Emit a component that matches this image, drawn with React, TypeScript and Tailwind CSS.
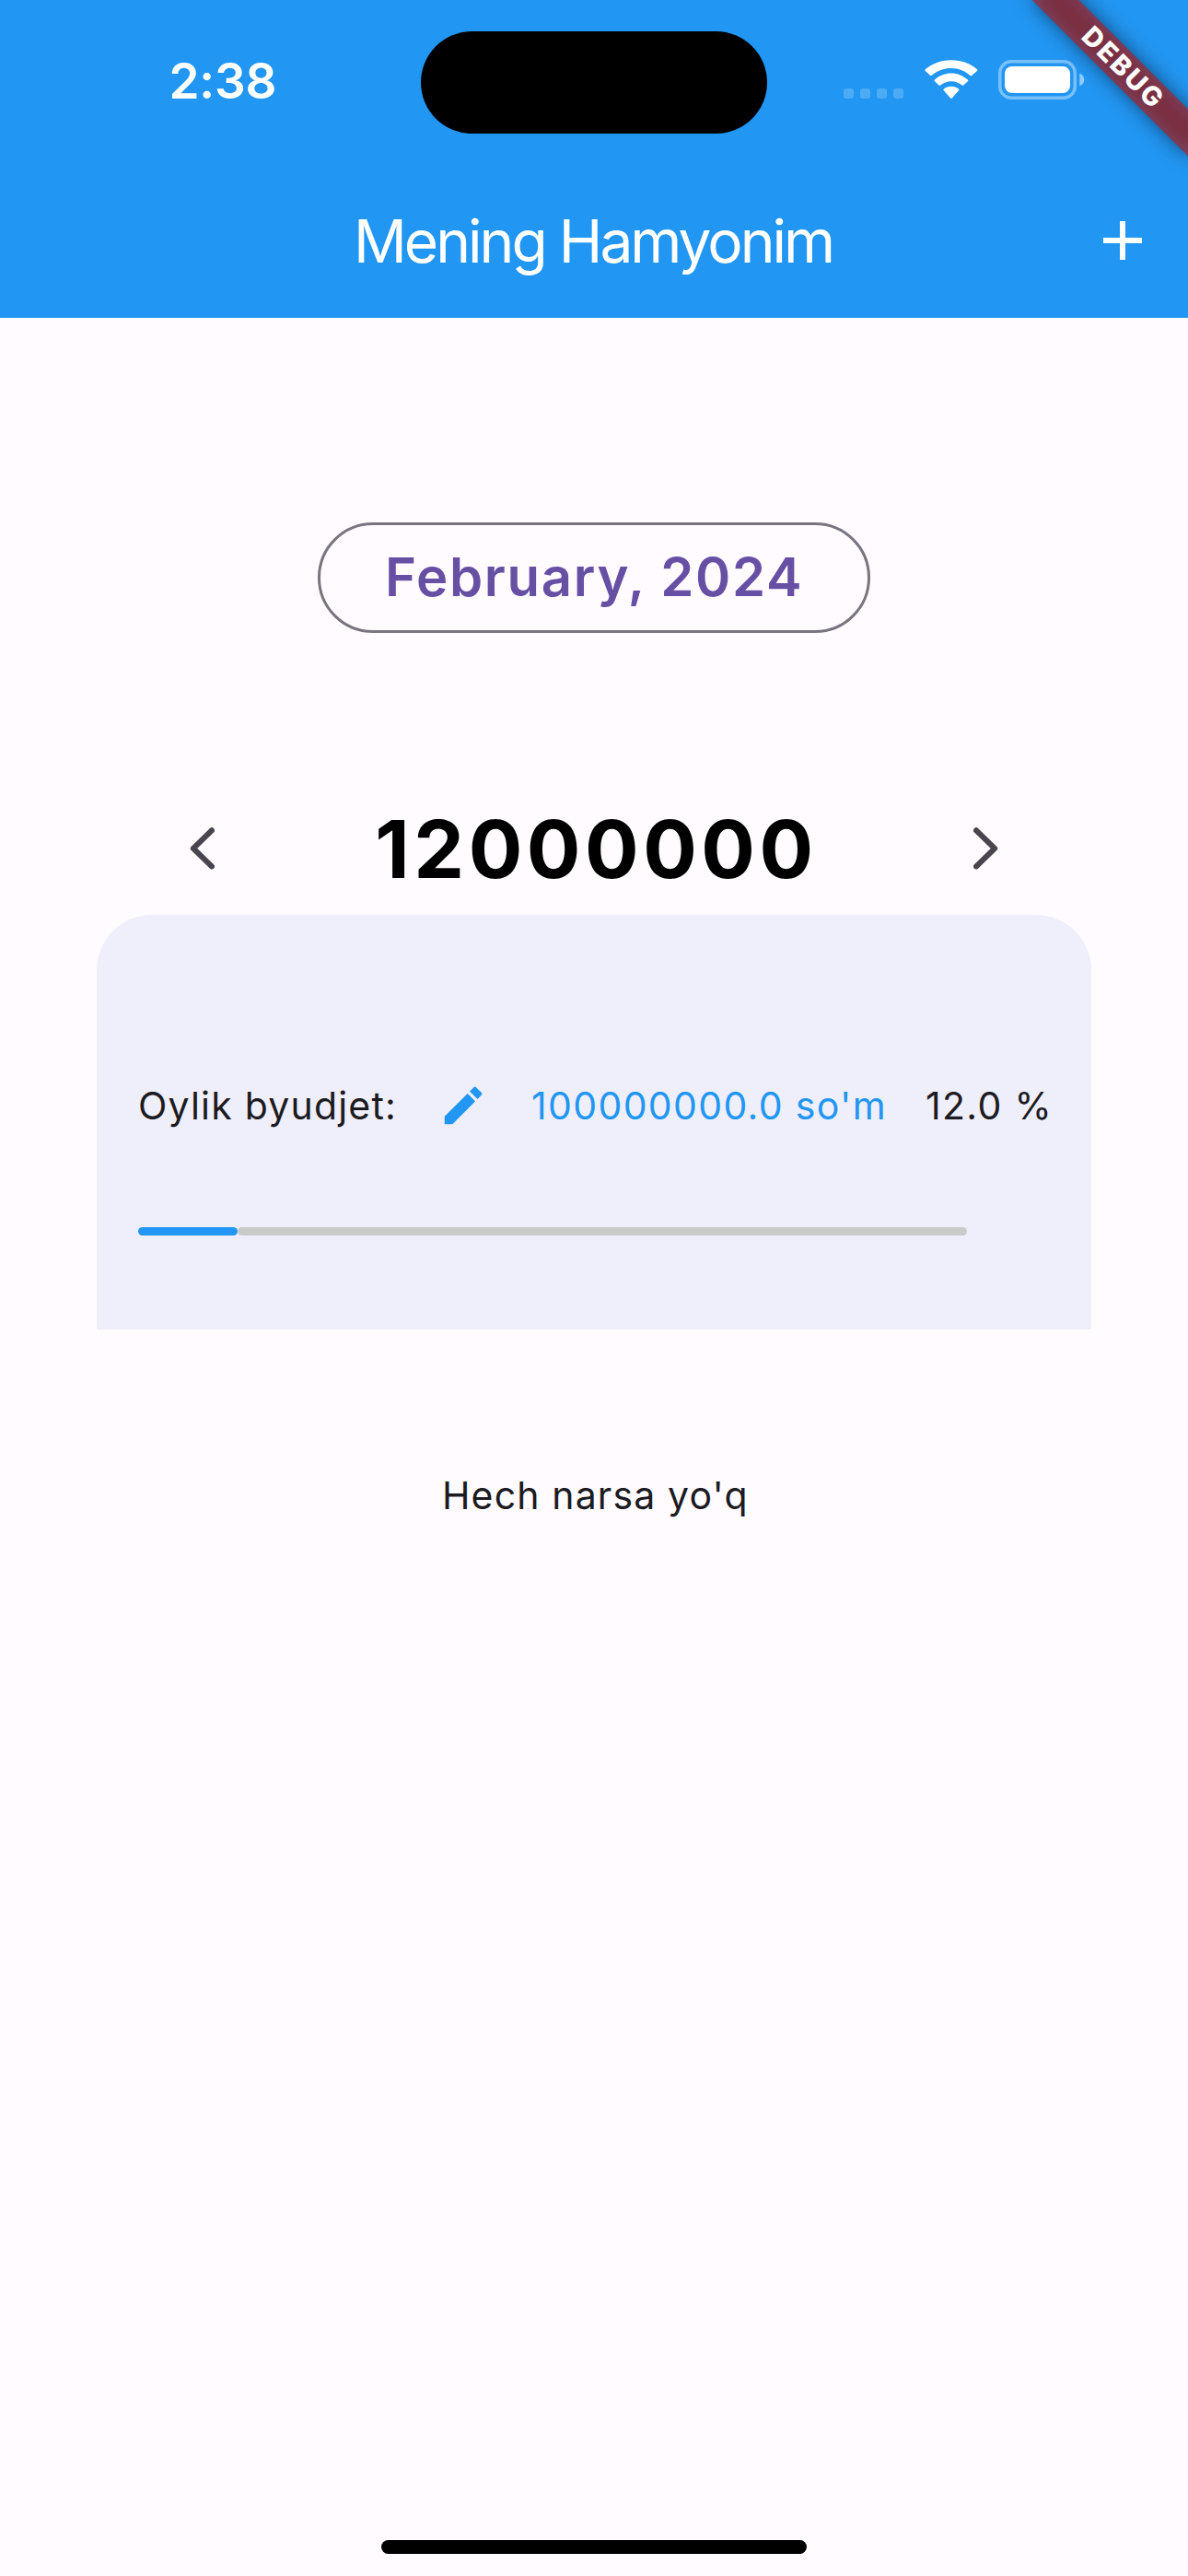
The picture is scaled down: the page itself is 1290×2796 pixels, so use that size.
function CellularDots() {
  return (
    <div className="mt-[96px] ml-[83px] flex gap-[7px]">
      {[0, 1, 2, 3].map((i) => (
        <span key={i} className="size-[11px] rounded-[3px] bg-white/20" />
      ))}
    </div>
  );
}

function WifiIcon() {
  return (
    <svg className="mt-[65px] ml-[23px] h-[43px] w-[58px]" viewBox="0 0 58 43" fill="white">
      <path d="M28.9 8.9c7.9 0 15.200 3 20.600 8.100.5.5 1.200.5 1.700 0l5.800-5.100c.6-.5.6-1.200.1-1.700C49.600 3.900 39.600.3 28.900.3S8.200 3.900.7 10.200c-.5.5-.5 1.200.1 1.700l5.200 4.900c.5.5 1.200.5 1.700 0C13.200 11.800 20.700 8.900 28.900 8.900z" />
      <path d="M28.900 23.200c4.500 0 8.600 1.600 11.700 4.300.5.4 1.200.4 1.700 0l4.500-4.200c.6-.5.6-1.300 0-1.800-4.700-4.400-11.100-7.100-17.900-7.100s-13.200 2.700-17.900 7.100c-.6.500-.6 1.300 0 1.800l4.500 4.200c.5.4 1.200.4 1.700 0 3.100-2.700 7.200-4.300 11.700-4.300z" />
      <path d="M37 33.300c.6-.5.6-1.300-.1-1.800-2.200-1.700-5-2.700-8-2.700s-5.800 1-8 2.700c-.7.5-.7 1.300-.1 1.800l7.300 8.100c.5.500 1.200.5 1.700 0z" />
    </svg>
  );
}

function BatteryIcon() {
  return (
    <svg className="mt-[65px] ml-[22px] h-[43px] w-[94px]" viewBox="0 0 94 43" fill="none">
      <rect x="1.750" y="1.750" width="81.500" height="39.500" rx="12.500" stroke="white" strokeOpacity="0.4" strokeWidth="3.500" />
      <rect x="7" y="7" width="71" height="29" rx="8" fill="white" />
      <path d="M88.300 14.800c3 1 5 3.600 5 6.700s-2 5.700-5 6.700z" fill="white" fillOpacity="0.5" />
    </svg>
  );
}

function StatusBar() {
  return (
    <div className="flex h-[177px] items-start">
      <div className="w-[457px] pt-[58px] pl-[183.500px] text-[53px] leading-[60px] font-semibold tracking-[-0.2px] text-white">
        2:38
      </div>
      <div className="mt-[33.5px] h-[111px] w-[376px] rounded-full bg-black" />
      <CellularDots />
      <WifiIcon />
      <BatteryIcon />
    </div>
  );
}

function DebugBanner() {
  return (
    <div className="absolute top-0 right-0 h-[240px] w-[240px] overflow-hidden">
      <div className="absolute top-[54.1px] left-[47.900px] h-[36px] w-[240px] rotate-45 bg-black/50 blur-[10.900px]" />
      <div className="absolute top-[54.1px] left-[47.900px] flex h-[36px] w-[240px] rotate-45 items-center bg-[#b71c1c]/63 pl-[66px] text-[29px] leading-[36px] font-extrabold tracking-[2.400px] text-white">
        DEBUG
      </div>
    </div>
  );
}

function AppBar() {
  return (
    <div className="flex h-[168px] items-center justify-between">
      <h1 className="pt-px pl-[384px] text-[64px] leading-[80px] font-normal tracking-[-2.960px] whitespace-nowrap text-white">
        Mening Hamyonim
      </h1>
      <svg className="mr-[35px] size-[72px]" viewBox="0 0 24 24" fill="white">
        <path d="M19 13h-6v6h-2v-6H5v-2h6V5h2v6h6z" />
      </svg>
    </div>
  );
}

function Chevron({ flip = false }: { flip?: boolean }) {
  return (
    <svg
      className={flip ? 'h-[46px] w-[28px] -scale-x-100' : 'h-[46px] w-[28px]'}
      viewBox="0 0 28 46"
      fill="none"
      stroke="#49454f"
      strokeWidth="6.200"
      strokeLinecap="round"
      strokeLinejoin="round"
    >
      <path d="M24.900 3.400L4.900 22.900l20 19.500" />
    </svg>
  );
}

function BudgetCard() {
  return (
    <section className="mx-[105px] h-[450px] rounded-t-[60px] bg-[#efeffb] px-[45px] pt-[180px]">
      <div className="flex h-[54px] items-center text-[41px] leading-[54px] whitespace-nowrap text-[#1c1b1f]">
        <span className="w-[326px] shrink-0 tracking-[1.200px]">Oylik byudjet:</span>
        <svg className="size-[54px] shrink-0" viewBox="0 0 24 24" fill="#2196f3">
          <path d="M3 17.250V21h3.750L17.810 9.940l-3.750-3.750L3 17.250zM20.710 7.040a.996.996 0 0 0 0-1.410l-2.340-2.340a.996.996 0 0 0-1.410 0l-1.830 1.830 3.750 3.750 1.830-1.830z" />
        </svg>
        <span className="ml-[47px] w-[428px] shrink-0 tracking-[1.340px] text-[#2196f3]">100000000.0 so'm</span>
        <span className="shrink-0 tracking-[1.330px]">12.0 %</span>
      </div>
      <div className="mt-[105px] flex h-[9px] w-[900px]">
        <div className="w-[12%] rounded-full bg-[#2196f3]" />
        <div className="flex-1 rounded-full bg-[#cbcaca]" />
      </div>
    </section>
  );
}

export default function App() {
  return (
    <div className="relative flex h-[2796px] w-[1290px] flex-col overflow-hidden bg-[#fffbff] font-['Inter',sans-serif]">
      <header className="bg-[#2196f3]">
        <StatusBar />
        <AppBar />
      </header>
      <DebugBanner />

      <main className="flex flex-1 flex-col">
        <button className="mt-[222px] ml-[345px] h-[120px] w-[600px] rounded-[60px] border-[3px] border-[#79747e] pb-[3px] pl-[70px] text-left text-[58px] leading-[110px] font-semibold tracking-[1.700px] text-[#6750a4]">
          February, 2024
        </button>

        <div className="mt-[156px] flex h-[150px] items-start justify-between px-[205px]">
          <div className="pt-[55px]">
            <Chevron />
          </div>
          <p className="pt-[24px] pl-[5px] text-[87px] leading-[110px] font-bold tracking-[4.500px] text-black">12000000</p>
          <div className="pt-[55px]">
            <Chevron flip />
          </div>
        </div>

        <BudgetCard />

        <p className="mt-[155px] pl-[480px] text-[41px] leading-[50px] tracking-[1.150px] text-[#1c1b1f]">Hech narsa yo'q</p>
      </main>

      <div className="mx-auto mb-[24px] h-[15px] w-[462px] rounded-full bg-black" />
    </div>
  );
}
